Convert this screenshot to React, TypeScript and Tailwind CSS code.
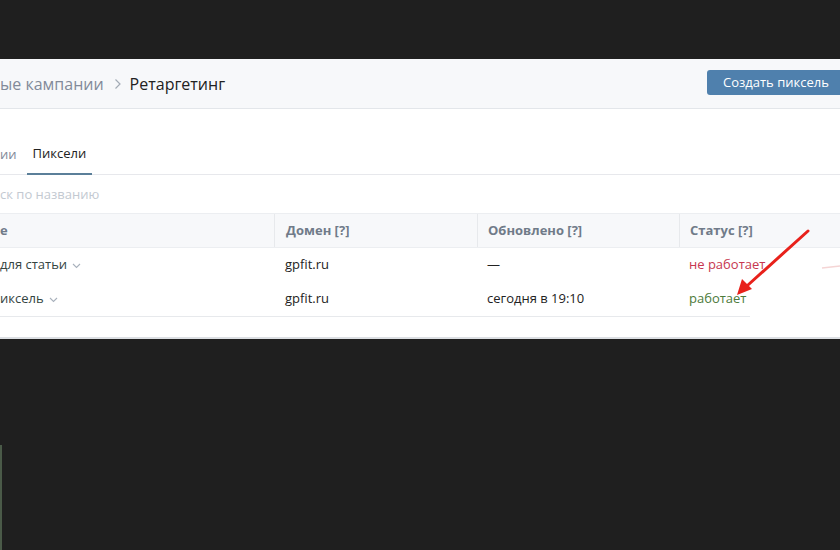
import React from "react";

const font = { fontFamily: '"Open Sans", "Noto Sans", sans-serif' };

const ROWS = [
  { name: "для статьи", domain: "gpfit.ru", updated: "—", status: "не работает", ok: false },
  { name: "иксель", domain: "gpfit.ru", updated: "сегодня в 19:10", status: "работает", ok: true },
];

function Chevron() {
  return (
    <svg width="9" height="6" viewBox="0 0 9 6" className="ml-[5px] mt-[1px]">
      <path d="M1 1l3.5 3.5L8 1" fill="none" stroke="#a8b1bc" strokeWidth="1.1" />
    </svg>
  );
}

export default function App() {
  return (
    <div className="relative w-[840px] h-[550px] overflow-hidden bg-[#1f1f1f]" style={font}>
      <div className="mt-[59px] h-[280px] bg-white border-b-2 border-[#dcdfe3] flex flex-col">
        {/* header bar */}
        <div className="h-[50px] shrink-0 bg-[#f7f8fa] border-b border-[#e3e6ea] flex items-center justify-between">
          <div className="flex items-center text-[16px] leading-none">
            <span className="text-[#828a99]">ые кампании</span>
            <svg width="8" height="12" viewBox="0 0 8 12" className="ml-[10px] mr-[8px]">
              <path d="M1.5 1.5L6 6l-4.5 4.5" fill="none" stroke="#a3abb5" strokeWidth="1.2" />
            </svg>
            <span className="text-[#222]">Ретаргетинг</span>
          </div>
          <button className="h-[25px] w-[133px] mt-[-2px] rounded-l-[3px] bg-[#4f80ad] text-white text-[13px] text-left pl-[16px] leading-none">
            Создать пиксель
          </button>
        </div>

        {/* tabs */}
        <div className="h-[66px] shrink-0 border-b border-[#e7e8ec] flex items-end text-[13px]">
          <span className="text-[#828a99] pb-[10px]">ии</span>
          <span className="ml-[10px] px-[6px] pb-[10px] text-[#222] border-b-2 border-[#5b7f99] mb-[-1px]">Пиксели</span>
        </div>

        {/* search */}
        <div className="h-[38px] shrink-0 flex items-center pt-[1px] text-[13px] text-[#c3c9d1]">ск по названию</div>

        {/* table */}
        <div className="text-[13px]">
          <div className="h-[35px] flex bg-[#f7f8fa] border-y border-[#eceef1] font-bold text-[#707b89]">
            <div className="w-[274px] shrink-0 flex items-center">е</div>
            <div className="w-[203px] shrink-0 flex items-center pl-[11px] border-l border-[#e7e9ec]">Домен [?]</div>
            <div className="w-[202px] shrink-0 flex items-center pl-[10px] border-l border-[#e7e9ec]">Обновлено [?]</div>
            <div className="flex-1 flex items-center pl-[10px] border-l border-[#e7e9ec]">Статус [?]</div>
          </div>
          <div className="w-[750px] border-b border-[#e7e9ec] text-[#222]">
            {ROWS.map((r) => (
              <div key={r.name} className="h-[34px] flex whitespace-nowrap">
                <div className="w-[274px] shrink-0 flex items-center text-[#34443f]">
                  {r.name}
                  <Chevron />
                </div>
                <div className="w-[203px] shrink-0 flex items-center pl-[11px]">{r.domain}</div>
                <div className="w-[202px] shrink-0 flex items-center pl-[10px]">{r.updated}</div>
                <div className={`flex items-center pl-[10px] ${r.ok ? "text-[#4c7a3a]" : "text-[#c7374f]"}`}>
                  {r.status}
                </div>
              </div>
            ))}
          </div>
        </div>
      </div>

      {/* faint strip on bottom-left edge */}
      <div className="absolute left-0 top-[445px] w-[2px] h-[105px] bg-[#4a5a48]" />

      {/* red annotation arrow */}
      <svg className="absolute left-0 top-0" width="840" height="550" viewBox="0 0 840 550">
        <line x1="808" y1="231" x2="748" y2="285" stroke="#e8211b" strokeWidth="3" strokeLinecap="round" />
        <path d="M737 295 L742 279 L752 289 Z" fill="#e8211b" />
        <line x1="822" y1="268" x2="840" y2="266" stroke="#f5d5d5" strokeWidth="1.5" />
      </svg>
    </div>
  );
}
